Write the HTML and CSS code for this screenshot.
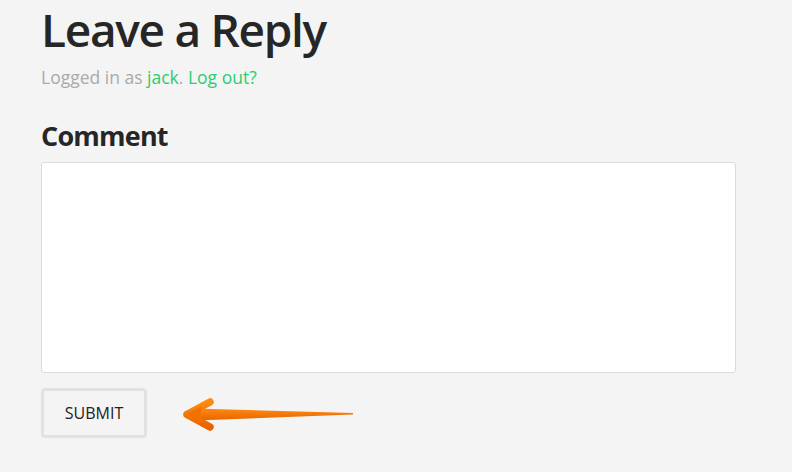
FILE: index.html
```html
<!DOCTYPE html>
<html>
<head>
<meta charset="utf-8">
<link rel="stylesheet" href="styles.css">
</head>
<body>
<div class="reply">
  <h2 class="title">Leave a Reply</h2>
  <p class="logged">Logged in as <a href="#">jack</a>. <a href="#">Log out?</a></p>
  <label class="label">Comment</label>
  <div class="textarea"></div>
  <div class="actions">
    <button class="submit">SUBMIT</button>
    <svg class="arrow" width="172" height="34" viewBox="0 0 172 34">
      <defs>
        <linearGradient id="g" x1="0" y1="0" x2="0" y2="1">
          <stop offset="0" stop-color="#ff8a10"/>
          <stop offset="1" stop-color="#e86400"/>
        </linearGradient>
      </defs>
      <path d="M12 10.5 L170 15 L170 16.5 L12 22.5 Z" fill="url(#g)"/>
      <path d="M4 16.5 L27 4 M4 16.5 L27 29" stroke="url(#g)" stroke-width="7.5" stroke-linecap="round" stroke-linejoin="round" fill="none"/>
      <path d="M3 16.5 L18 9 L18 24 Z" fill="#f07000"/>
    </svg>
  </div>
</div>
</body>
</html>
```
FILE: styles.css
```css
html, body {
  margin: 0;
  padding: 0;
  background: #f4f4f4;
}
body {
  font-family: "Open Sans", "Noto Sans", sans-serif;
}
.reply {
  padding: 0 56px 0 41px;
}
.title {
  margin: 0;
  font-size: 46px;
  line-height: 58px;
  font-weight: 600;
  color: #262626;
  letter-spacing: -1.3px;
}
.logged {
  margin: 8px 0 0;
  font-size: 17.5px;
  line-height: 22px;
  color: #aaaaaa;
}
.logged a {
  color: #2ecc71;
  text-decoration: none;
}
.label {
  display: block;
  margin-top: 31px;
  font-size: 27px;
  line-height: 34px;
  font-weight: 700;
  color: #262626;
  letter-spacing: -0.8px;
}
.textarea {
  margin-top: 9px;
  height: 209px;
  background: #fff;
  border: 1px solid #dcdcdc;
  border-radius: 3px;
}
.actions {
  display: flex;
  align-items: center;
  gap: 36px;
  margin-top: 15px;
}
.submit {
  width: 106px;
  height: 50px;
  background: #f4f4f4;
  border: 3px solid #e2e2e2;
  border-radius: 4px;
  font-family: "Open Sans", "Noto Sans", sans-serif;
  font-size: 16px;
  color: #222;
  padding: 0;
}
.arrow {
  display: block;
  margin-top: 4px;
}
```
